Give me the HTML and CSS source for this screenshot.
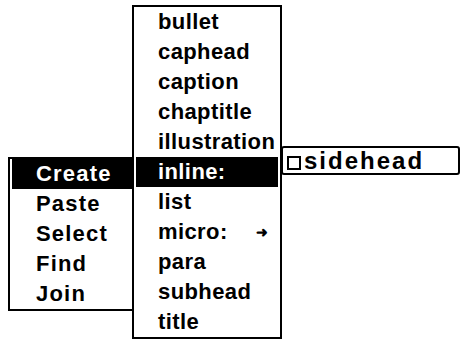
FILE: index.html
```html
<!DOCTYPE html>
<html lang="en">
<head>
    <meta charset="UTF-8">
    <title>Menus</title>
    <link rel="stylesheet" href="styles.css">
</head>
<body>

    <div class="desk">
        <ul class="menu commands">
            <li class="on">Create</li>
            <li>Paste</li>
            <li>Select</li>
            <li>Find</li>
            <li>Join</li>
        </ul>

        <ul class="menu styles">
            <li>bullet</li>
            <li>caphead</li>
            <li>caption</li>
            <li>chaptitle</li>
            <li>illustration</li>
            <li class="on">inline:</li>
            <li>list</li>
            <li class="more">micro: <span class="arrow">&#10140;</span></li>
            <li>para</li>
            <li>subhead</li>
            <li>title</li>
        </ul>

        <div class="submenu">
            <span class="box"></span>sidehead
        </div>
    </div>

</body>
</html>
```

FILE: styles.css
```css
body {
    margin: 0;
    background: white;
    color: black;
    font-family: "Liberation Sans", Arial, sans-serif;
    font-weight: bold;
    font-size: 22px;
}
.desk {
    display: flex;
    align-items: flex-start;
    padding: 5px 0 0 8px;
}
.menu {
    list-style: none;
    margin: 0;
    padding: 0;
    border: 2px solid black;
    background: white;
}
.menu li {
    height: 30px;
    line-height: 30px;
    margin: 0 2px;
    white-space: nowrap;
    letter-spacing: 0.4px;
}
.menu li.on {
    background: black;
    color: white;
}
.commands {
    width: 124px;
    margin-top: 152px;
    margin-right: -4px;
}
.commands li {
    padding-left: 24px;
    letter-spacing: 1.2px;
}
.styles {
    width: 146px;
}
.styles li {
    padding-left: 22px;
}
.more {
    display: flex;
}
.arrow {
    margin-left: auto;
    margin-right: 10px;
    font-size: 14px;
}
.submenu {
    flex: 1;
    margin-top: 141px;
    margin-left: -1px;
    margin-right: 2px;
    border: 2px solid black;
    border-radius: 3px;
    padding: 0 4px;
    height: 25px;
    line-height: 25px;
    background: white;
    display: flex;
    align-items: center;
    gap: 3px;
    font-size: 24px;
    letter-spacing: 2px;
}
.box {
    width: 10px;
    height: 10px;
    margin-top: 4px;
    border: 2px solid black;
}
```
